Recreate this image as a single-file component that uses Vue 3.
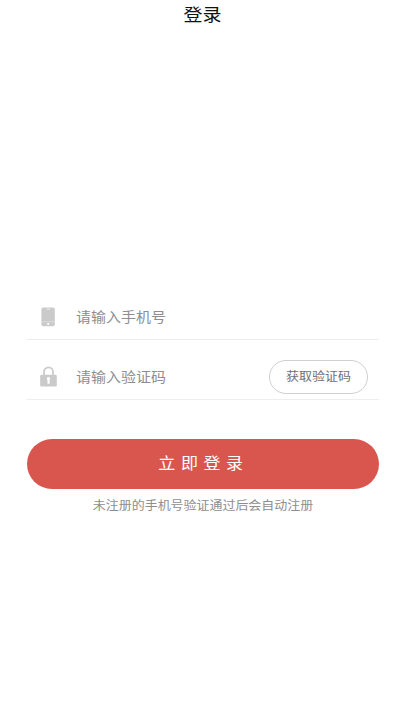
<script setup>
import { ref } from 'vue'

const phone = ref('')
const code = ref('')
</script>

<template>
  <main class="page">
    <header class="title flat">登录</header>
    <form class="form" @submit.prevent>
      <label class="row">
        <svg class="icon" width="18" height="22" viewBox="0 0 18 22">
          <rect x="2.4" y="1.4" width="13.4" height="18.8" rx="2" fill="#cacaca" />
          <path d="M2.4 15.8H15.8" stroke="#e2e2e2" stroke-width=".8" />
          <path d="M7.6 3H11" stroke="#f2f2f2" stroke-width=".9" />
          <circle cx="9.2" cy="18" r="1.1" fill="#fff" />
        </svg>
        <input v-model="phone" class="field flat" type="tel" placeholder="请输入手机号" />
      </label>
      <div class="row">
        <svg class="icon" width="18" height="22" viewBox="0 0 18 22">
          <path d="M5 9V5.8a4.5 4.5 0 0 1 9 0V9" fill="none" stroke="#cacaca" stroke-width="1.7" />
          <rect x="1.2" y="8.8" width="16.6" height="11.8" rx="1.4" fill="#cacaca" />
          <path d="M9.5 11a1.8 1.8 0 0 1 1.1 3.1V17.8H8.5V14.2A1.8 1.8 0 0 1 9.5 11Z" fill="#fff" />
        </svg>
        <input v-model="code" class="field flat" type="text" placeholder="请输入验证码" />
        <button class="code" type="button"><span class="flat">获取验证码</span></button>
      </div>
      <button class="submit" type="submit"><span class="flat">立即登录</span></button>
      <p class="hint flat">未注册的手机号验证通过后会自动注册</p>
    </form>
  </main>
</template>

<style>
body {
  background: #fff;
}
</style>

<style scoped>
.page,
.field,
.code,
.submit {
  font-family: "Noto Sans CJK SC", sans-serif;
}
.page {
  box-sizing: border-box;
  height: 720px;
  background: #fff;
}
/* slightly flattened lettering */
.flat {
  display: block;
  transform: scaleY(0.92);
}
.title {
  height: 30px;
  line-height: 28px;
  text-align: center;
  font-size: 19px;
  color: #111;
}
.form {
  padding: 250px 26px 0 27px;
}
.row {
  box-sizing: border-box;
  display: flex;
  align-items: center;
  height: 60px;
  padding: 14px 11px 0 12px;
  border-bottom: 1px solid #eee;
}
.icon {
  flex: none;
  margin-right: 19px;
}
.field {
  flex: 1;
  min-width: 0;
  height: 30px;
  padding: 0 0 4px;
  border: 0;
  outline: 0;
  background: transparent;
  font-size: 15px;
  color: #333;
}
.field::placeholder {
  color: #8e8e8e;
  opacity: 1;
}
.code {
  box-sizing: border-box;
  width: 99px;
  height: 34px;
  padding: 0 0 2px;
  border: 1px solid #d0d0d0;
  border-radius: 17px;
  background: #fff;
  font-size: 13px;
  line-height: 30px;
  color: #707070;
}
.submit {
  display: block;
  width: 100%;
  height: 50px;
  margin-top: 39px;
  padding: 0 0 4px 1px;
  border: 0;
  border-radius: 25px;
  background: #d9564f;
  font-size: 17px;
  letter-spacing: 5.6px;
  color: #fff;
}
.hint {
  margin: 6px 0 0;
  line-height: 20px;
  text-align: center;
  font-size: 13px;
  letter-spacing: -0.04px;
  color: #8e8e8e;
}
</style>
